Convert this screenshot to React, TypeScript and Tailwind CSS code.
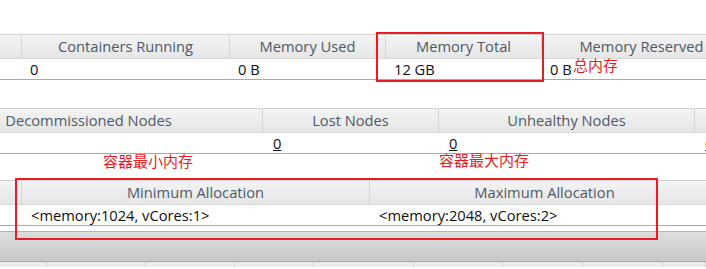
import React from "react";

type Col = { label: string; w: number; value?: string; link?: boolean };

const font = { fontFamily: '"Open Sans", "Noto Sans CJK SC", sans-serif' };

function Table({ cols, offset = 0, pad = 8 }: { cols: Col[]; offset?: number; pad?: number }) {
  return (
    <div className="w-full overflow-hidden">
      <div className="flex flex-col" style={{ marginLeft: offset }}>
        <div className="flex h-[24px] border-t border-[#d2d2d2] bg-gradient-to-b from-[#f3f3f3] to-[#e6e6e6]">
          {cols.map((c, i) => (
            <div
              key={i}
              className="flex shrink-0 items-center justify-center whitespace-nowrap border-r border-[#d6d6d6] text-[14.7px] text-[#4e5968]"
              style={{ width: c.w }}
            >
              {c.label}
            </div>
          ))}
        </div>
        <div className="flex h-[22px] border-t border-[#d8d8d8] border-b border-b-[#a9a9a9] bg-white">
          {cols.map((c, i) => (
            <div
              key={i}
              className="flex shrink-0 items-center whitespace-nowrap text-[14.7px] text-[#111]"
              style={{ width: c.w, paddingLeft: pad }}
            >
              {c.link ? <span className="underline">{c.value}</span> : c.value}
            </div>
          ))}
        </div>
      </div>
    </div>
  );
}

export default function App() {
  return (
    <div className="relative h-[269px] w-[706px] overflow-hidden bg-white" style={font}>
      <div className="pt-[34px]">
        <Table
          cols={[
            { label: "", w: 22, value: "" },
            { label: "Containers Running", w: 208, value: "0" },
            { label: "Memory Used", w: 156, value: "0 B" },
            { label: "Memory Total", w: 156, value: "12 GB" },
            { label: "Memory Reserved", w: 200, value: "0 B" },
          ]}
        />
      </div>
      <div className="pt-[28px]">
        <Table
          offset={-85}
          pad={10}
          cols={[
            { label: "Decommissioned Nodes", w: 348, value: "" },
            { label: "Lost Nodes", w: 176, value: "0", link: true },
            { label: "Unhealthy Nodes", w: 256, value: "0", link: true },
            { label: "", w: 60, value: "0", link: true },
          ]}
        />
      </div>
      <div className="pt-[26px]">
        <Table
          pad={9}
          cols={[
            { label: "", w: 22, value: "" },
            { label: "Minimum Allocation", w: 348, value: "<memory:1024, vCores:1>" },
            { label: "Maximum Allocation", w: 350, value: "<memory:2048, vCores:2>" },
          ]}
        />
      </div>
      <div className="mt-[5px] h-[30px] border-t border-[#b4b4b4] bg-gradient-to-b from-[#dedede] to-[#c8c8c8]" />
      <div className="flex h-[6px] border-t border-[#a8a8a8] bg-[#ececec]">
        {[47, 99, 89, 79, 100, 89, 80, 80, 43].map((w, i) => (
          <div key={i} className="shrink-0 border-r border-[#d4d4d4]" style={{ width: w }} />
        ))}
      </div>

      {/* annotations */}
      <div className="absolute left-[376px] top-[32px] h-[50px] w-[168px] border-2 border-[#e81c24]" />
      <div className="absolute left-[573px] top-[55px] text-[15px] leading-[20px] text-[#e81c24]">总内存</div>
      <div className="absolute left-[103px] top-[151px] text-[15px] leading-[20px] text-[#e81c24]">容器最小内存</div>
      <div className="absolute left-[439px] top-[150px] text-[15px] leading-[20px] text-[#e81c24]">容器最大内存</div>
      <div className="absolute left-[15px] top-[178px] h-[62px] w-[643px] border-2 border-[#e81c24]" />
    </div>
  );
}
